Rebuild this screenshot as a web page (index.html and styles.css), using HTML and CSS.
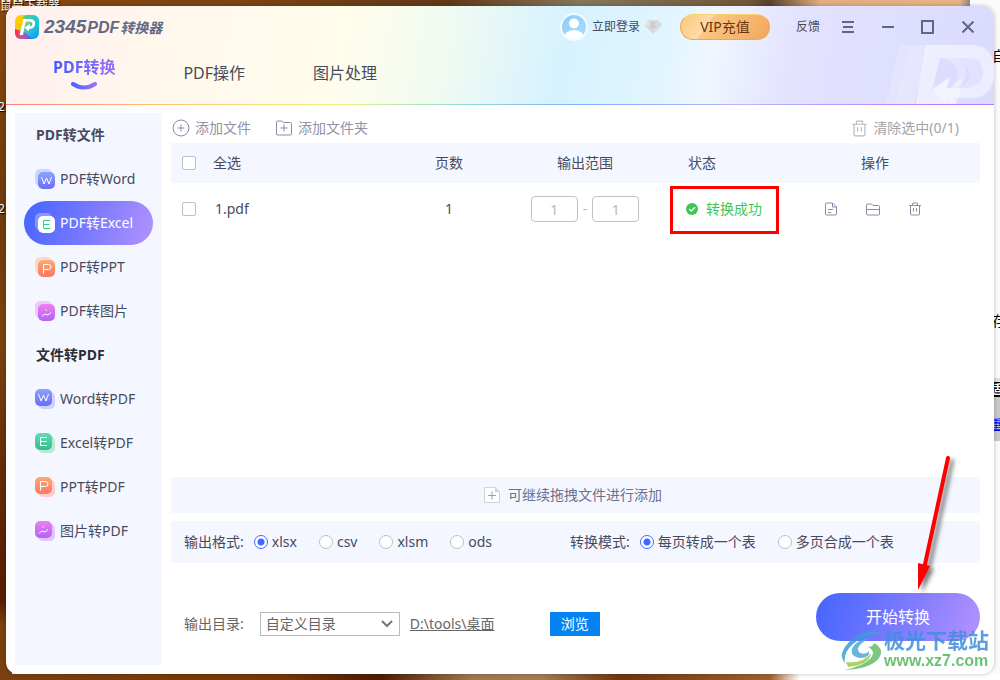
FILE: index.html
```html
<!DOCTYPE html>
<html lang="zh-CN">
<head>
<meta charset="utf-8">
<title>2345 PDF转换器</title>
<link rel="stylesheet" href="styles.css">
</head>
<body>
<svg class="defs" width="0" height="0" aria-hidden="true">
  <defs>
    <linearGradient id="g-blue" x1="0" y1="0" x2="0" y2="1"><stop offset="0" stop-color="#8aa5fb"/><stop offset="1" stop-color="#6a6cf8"/></linearGradient>
    <linearGradient id="g-green" x1="0" y1="0" x2="0" y2="1"><stop offset="0" stop-color="#62dcb8"/><stop offset="1" stop-color="#35bd86"/></linearGradient>
    <linearGradient id="g-orange" x1="0" y1="0" x2="0" y2="1"><stop offset="0" stop-color="#fda870"/><stop offset="1" stop-color="#fd7865"/></linearGradient>
    <linearGradient id="g-pink" x1="0" y1="0" x2="0" y2="1"><stop offset="0" stop-color="#ef7df5"/><stop offset="1" stop-color="#b163f4"/></linearGradient>
    <symbol id="l-w" viewBox="0 0 17 17"><path d="M3.500 5L6 12L8.500 6L11 12L13.500 5"/></symbol>
    <symbol id="l-e" viewBox="0 0 17 17"><path d="M12 4.500H5.500V12.500H12M5.500 8.500H11.500"/></symbol>
    <symbol id="l-p" viewBox="0 0 17 17"><path d="M5.500 13.500V4.500H10.500Q13 4.500 13 7T10.500 9.500H5.500"/></symbol>
    <symbol id="l-i" viewBox="0 0 17 17"><path d="M4 12.500Q6.500 8.500 8 10.500Q9.500 12.500 13 8.500M7.500 6h1.500"/></symbol>
    <symbol id="i-trash" viewBox="0 0 14 14"><path d="M1 3.500H13M4.500 3.500V1.500Q4.500 1 5 1H9Q9.500 1 9.500 1.500V3.500M2.500 3.500V12Q2.500 13 3.500 13H10.500Q11.500 13 11.500 12V3.500M5.500 6V9.500M8.500 6V9.500"/></symbol>
  </defs>
</svg>

<div class="desktop" aria-hidden="true">
  <span class="desk-label desk-a">鼠鼠下载器</span>
  <span class="desk-label desk-b">2</span>
  <span class="desk-label desk-c">2</span>
  <span class="page-text page-a">自</span>
  <span class="page-text page-b">存</span>
  <div class="desk-panel"><b>适</b><u>重</u></div>
</div>

<div class="window">
  <header class="header">
    <svg class="header-art" viewBox="0 0 110 60" aria-hidden="true">
      <g fill="#fff">
        <path opacity=".2" d="M16 1H28L14 60H2Z"/>
        <path opacity=".25" d="M28 1H46L30 60H12Z"/>
        <path opacity=".5" d="M42 1H90Q110 3 110 25V34Q106 54 88 54H70L72 60H32Z M56 14L48 46L66 33L63 44H84Q99 40 99 28Q98 14 84 14Z" fill-rule="evenodd"/>
        <path opacity=".2" d="M62 14H84Q99 14 99 28Q99 40 84 44H76Q90 36 84 24Q78 16 62 14Z"/>
        <path opacity=".25" d="M58 14H68Q84 18 82 32Q79 42 68 44L74 32Q74 20 58 14Z"/>
        <path opacity=".35" d="M48 45L66 33L62 44H66L79 33L73 60L62 54V60Z"/>
      </g>
    </svg>
    <div class="titlebar">
      <div class="brand">
        <svg width="24" height="24" viewBox="0 0 24 24" aria-hidden="true">
          <defs>
            <linearGradient id="lg1" x1="0" y1="0" x2="1" y2="1"><stop offset="0" stop-color="#ffd600"/><stop offset=".36" stop-color="#ffc400"/><stop offset=".5" stop-color="#3ccfc2"/><stop offset="1" stop-color="#009bff"/></linearGradient>
            <linearGradient id="lg2" x1="0" y1="0" x2="1" y2="0"><stop offset="0" stop-color="#ff3030"/><stop offset=".35" stop-color="#d34d9e"/><stop offset="1" stop-color="#2176ff"/></linearGradient>
            <clipPath id="lgc"><rect width="24" height="24" rx="6"/></clipPath>
          </defs>
          <g clip-path="url(#lgc)">
            <rect width="24" height="24" fill="url(#lg1)"/>
            <path d="M0 14L9 17L18 24H0Z" fill="url(#lg2)"/>
            <path d="M11 0H24V13Q18 5 7 3Z" fill="#16cbd3" opacity=".8"/>
          </g>
          <path d="M4.500 20L8.500 4H11L8 20Z" fill="#fff"/>
          <path d="M9 4H15Q21 4.500 20 9.500Q19 14 14 14V16.500L9.500 12.500L15 9V11.500Q17.500 11 17.500 9Q17.500 6.500 14.500 6.500H9Z" fill="#fff"/>
        </svg>
        <h1 class="brand-name"><span class="brand-num">2345</span><span class="brand-pdf">PDF</span><span class="brand-cn">转换器</span></h1>
      </div>
      <div class="account">
        <a class="login" href="#login">
          <svg width="28" height="28" viewBox="0 0 28 28" aria-hidden="true">
            <defs><linearGradient id="av" x1="0" y1="0" x2="1" y2="1"><stop offset="0" stop-color="#8ccdf8"/><stop offset="1" stop-color="#a9ddfc"/></linearGradient><clipPath id="avc"><circle cx="14" cy="14" r="12.500"/></clipPath></defs>
            <circle cx="14" cy="14" r="13" fill="url(#av)" stroke="#f2fbff" stroke-width="2"/>
            <circle cx="14" cy="10.500" r="5" fill="#fff"/>
            <ellipse cx="14" cy="24.500" rx="10" ry="7.500" fill="#fff" clip-path="url(#avc)"/>
          </svg>
          <span>立即登录</span>
          <svg width="18" height="14" viewBox="0 0 18 14" aria-hidden="true"><path d="M4 0H14L18 5L9 14L0 5Z" fill="#d9dadd"/><path d="M0 5L4 0L6 5Z" fill="#e5e5e7"/><path d="M11.500 3Q7 1.500 7 4Q7 5 9 5.300Q11.500 6 10.500 7.300Q9 8.500 6.500 7" fill="none" stroke="#b8bbc0"/></svg>
        </a>
        <button class="vip">VIP充值</button>
        <a class="feedback" href="#feedback">反馈</a>
      </div>
      <div class="controls">
        <button aria-label="菜单"><svg viewBox="0 0 16 16"><path d="M2 3H14M3 8H13M2 13H14"/></svg></button>
        <button aria-label="最小化"><svg viewBox="0 0 16 16"><path d="M2 8H14"/></svg></button>
        <button aria-label="最大化"><svg viewBox="0 0 16 16"><path d="M2 2H13V14H2Z"/></svg></button>
        <button aria-label="关闭"><svg viewBox="0 0 16 16"><path d="M2.500 2.500L13.500 13.500M13.500 2.500L2.500 13.500"/></svg></button>
      </div>
    </div>
    <nav class="tabs">
      <a class="tab tab-active" href="#convert"><span>PDF转换</span>
        <svg width="26" height="8" viewBox="0 0 26 8" aria-hidden="true"><defs><linearGradient id="sm"><stop offset="0" stop-color="#4a63ff"/><stop offset="1" stop-color="#9c71ff"/></linearGradient></defs><path d="M2 2Q13 9 24 2" fill="none" stroke="url(#sm)" stroke-width="4" stroke-linecap="round"/></svg>
      </a>
      <a class="tab" href="#edit">PDF操作</a>
      <a class="tab" href="#image">图片处理</a>
    </nav>
  </header>

  <div class="body">
    <aside class="sidebar">
      <h2 class="side-title">PDF转文件</h2>
      <nav class="side-list">
        <a class="side-item" href="#pdf-word"><svg class="side-icon" viewBox="0 0 20 20"><rect width="17" height="17" rx="5" fill="#c9d9fc"/><rect x="3" y="3" width="17" height="17" rx="5" fill="url(#g-blue)"/><use href="#l-w" x="3" y="3" width="17" height="17"/></svg>PDF转Word</a>
        <a class="side-item side-active" href="#pdf-excel"><svg class="side-icon icon-green" viewBox="0 0 20 20"><rect width="17" height="17" rx="5" fill="#fff" opacity=".3"/><rect x="3" y="3" width="17" height="17" rx="5" fill="#fff"/><use href="#l-e" x="3" y="3" width="17" height="17"/></svg>PDF转Excel</a>
        <a class="side-item" href="#pdf-ppt"><svg class="side-icon" viewBox="0 0 20 20"><rect width="17" height="17" rx="5" fill="#fbd8cc"/><rect x="3" y="3" width="17" height="17" rx="5" fill="url(#g-orange)"/><use href="#l-p" x="3" y="3" width="17" height="17"/></svg>PDF转PPT</a>
        <a class="side-item" href="#pdf-image"><svg class="side-icon" viewBox="0 0 20 20"><rect width="17" height="17" rx="5" fill="#eccafa"/><rect x="3" y="3" width="17" height="17" rx="5" fill="url(#g-pink)"/><use href="#l-i" x="3" y="3" width="17" height="17"/></svg>PDF转图片</a>
      </nav>
      <h2 class="side-title side-title-dark">文件转PDF</h2>
      <nav class="side-list">
        <a class="side-item" href="#word-pdf"><svg class="side-icon" viewBox="0 0 20 20"><rect x="3" y="3" width="17" height="17" rx="5" fill="#cfd3fc"/><rect width="17" height="17" rx="5" fill="url(#g-blue)"/><use href="#l-w" width="17" height="17"/></svg>Word转PDF</a>
        <a class="side-item" href="#excel-pdf"><svg class="side-icon" viewBox="0 0 20 20"><rect x="3" y="3" width="17" height="17" rx="5" fill="#b9e9d9"/><rect width="17" height="17" rx="5" fill="url(#g-green)"/><use href="#l-e" width="17" height="17"/></svg>Excel转PDF</a>
        <a class="side-item" href="#ppt-pdf"><svg class="side-icon" viewBox="0 0 20 20"><rect x="3" y="3" width="17" height="17" rx="5" fill="#fbcfcf"/><rect width="17" height="17" rx="5" fill="url(#g-orange)"/><use href="#l-p" width="17" height="17"/></svg>PPT转PDF</a>
        <a class="side-item" href="#image-pdf"><svg class="side-icon" viewBox="0 0 20 20"><rect x="3" y="3" width="17" height="17" rx="5" fill="#dfc5fb"/><rect width="17" height="17" rx="5" fill="url(#g-pink)"/><use href="#l-i" width="17" height="17"/></svg>图片转PDF</a>
      </nav>
    </aside>

    <main class="main">
      <div class="toolbar">
        <button class="tool"><svg width="18" height="18" viewBox="0 0 18 18"><circle cx="9" cy="9" r="8"/><path d="M5.500 9H12.500M9 5.500V12.500"/></svg>添加文件</button>
        <button class="tool"><svg width="18" height="18" viewBox="0 0 18 18"><path d="M1.500 16V3Q1.500 2 2.500 2H6.500L8.500 3.500H15.500Q16.500 3.500 16.500 4.500V15Q16.500 16 15.500 16H2.500Q1.500 16 1.500 15M5.500 9H12.500M9 5.500V12.500"/></svg>添加文件夹</button>
        <button class="tool tool-clear"><svg width="17" height="17" viewBox="0 0 14 14"><use href="#i-trash"/></svg>清除选中(0/1)</button>
      </div>

      <table class="files">
        <colgroup><col class="c-check"><col><col class="c-pages"><col class="c-range"><col class="c-status"><col class="c-ops"></colgroup>
        <thead>
          <tr>
            <th><input class="check" type="checkbox" id="all"></th>
            <th class="left"><label for="all">全选</label></th>
            <th>页数</th>
            <th>输出范围</th>
            <th class="status-head">状态</th>
            <th class="ops-head">操作</th>
          </tr>
        </thead>
        <tbody>
          <tr>
            <td><input class="check" type="checkbox" id="f1"></td>
            <td class="left"><label for="f1">1.pdf</label></td>
            <td>1</td>
            <td><div class="range"><input type="text" value="1" aria-label="起始页"><span>-</span><input type="text" value="1" aria-label="结束页"></div></td>
            <td class="status-cell">
              <div class="status"><svg width="12" height="12" viewBox="0 0 12 12" aria-hidden="true"><circle cx="6" cy="6" r="6" fill="#3dc653"/><path d="M3.200 6L5.300 8L9 4.200" fill="none" stroke="#fff" stroke-width="1.300"/></svg>转换成功</div>
              <div class="highlight"></div>
            </td>
            <td>
              <div class="ops">
                <button aria-label="打开文件"><svg width="14" height="14" viewBox="0 0 14 14"><path d="M8.500 1H2.500Q1.500 1 1.500 2V12Q1.500 13 2.500 13H11.500Q12.500 13 12.500 12V5L8.500 1V5H12.500M4 7.500H9M4 10.500H7"/></svg></button>
                <button aria-label="打开文件夹"><svg width="14" height="14" viewBox="0 0 14 14"><path d="M.500 12V3Q.500 2 1.500 2H5.500L7 3.500H12.500Q13.500 3.500 13.500 4.500V12Q13.500 13 12.500 13H1.500Q.500 13 .500 12M.500 7.500H13.500"/></svg></button>
                <button aria-label="删除"><svg width="14" height="14" viewBox="0 0 14 14"><use href="#i-trash"/></svg></button>
              </div>
            </td>
          </tr>
        </tbody>
      </table>

      <div class="drop"><svg width="16" height="16" viewBox="0 0 16 16" aria-hidden="true"><path d="M.500 .500H11L15.500 5V15.500H.500Z" fill="#fff" stroke="#d2d3d8"/><path d="M11 0L16 5H11Z" fill="#d2d3d8"/><path d="M4 8.500H12M8 4.500V12.500" stroke="#9c9faa" stroke-width="1"/></svg>可继续拖拽文件进行添加</div>

      <div class="options">
        <div class="group" role="radiogroup" aria-labelledby="fmt">
          <span class="group-name" id="fmt">输出格式:</span>
          <label><input type="radio" name="fmt" checked>xlsx</label>
          <label><input type="radio" name="fmt">csv</label>
          <label><input type="radio" name="fmt">xlsm</label>
          <label><input type="radio" name="fmt">ods</label>
        </div>
        <div class="group" role="radiogroup" aria-labelledby="mode">
          <span class="group-name" id="mode">转换模式:</span>
          <label><input type="radio" name="mode" checked>每页转成一个表</label>
          <label><input type="radio" name="mode">多页合成一个表</label>
        </div>
      </div>

      <div class="footer">
        <div class="output">
          <label for="dir">输出目录:</label>
          <select id="dir"><option>自定义目录</option></select>
          <a href="#folder">D:\tools\桌面</a>
          <button class="browse">浏览</button>
        </div>
        <button class="start">开始转换</button>
      </div>
    </main>
  </div>

  <svg class="arrow" width="60" height="150" viewBox="0 0 60 150" aria-hidden="true">
    <path d="M39 6L15 117" stroke="#f00" stroke-width="4" stroke-linecap="round"/>
    <path d="M9 111L21 114L9 138Z" fill="#f00"/>
  </svg>

  <div class="watermark" aria-hidden="true">
    <svg width="42" height="40" viewBox="0 0 42 40">
      <defs><linearGradient id="wm" x1="0" y1="0" x2="1" y2="1"><stop offset="0" stop-color="#2c8fe0"/><stop offset=".5" stop-color="#3fa8c8"/><stop offset="1" stop-color="#8cc63f"/></linearGradient></defs>
      <path d="M41 1Q20-2 8 11Q-4 24 4 32Q2 22 12 13Q22 4 41 1Z" fill="url(#wm)"/>
      <path d="M33 6Q15 8 11 18Q9 26 20 27Q29 27 28 20Q25 24 19 22Q14 18 21 12Q26 8 33 6Z" fill="#4ba9d9"/>
      <path d="M33 12Q44 18 38 27Q30 38 3 39Q23 35 30 27Q35 20 27 16Q32 16 33 12Z" fill="#67bd6a"/>
      <path d="M5 31Q22 33 30 22Q29 34 7 36Z" fill="#a0c94c"/>
    </svg>
    <div class="watermark-text"><span class="watermark-cn">极光下载站</span><span class="watermark-url">www.xz7.com</span></div>
  </div>
</div>
</body>
</html>
```
FILE: styles.css
```css
* { box-sizing: border-box; }

body {
  margin: 0;
  min-height: 100vh;
  padding: 6px;
  display: flex;
  position: relative;
  overflow: hidden;
  font-family: "Noto Sans", "Noto Sans CJK SC", sans-serif;
  font-size: 14px;
  line-height: 20px;
  color: #484a5c;
  background:
    linear-gradient(90deg, #8a480f 0%, #7c4312 25%, #5f3a18 45%, #85775c 58%, #715739 75%, #59432c 77%, #e0af80 82%, #e6b385 96%, #888 97%, transparent 97%) top / 100% 6px no-repeat,
    linear-gradient(90deg, #7a3f10 0%, #743708 28%, #4c1c04 38%, #9b7851 47%, #a17d55 54%, #6d3510 62%, #a0602e 77%, #fff 80%) bottom / 100% 6px no-repeat,
    linear-gradient(180deg, #8a480f 0%, #6f3b0a 30%, #7c4310 50%, #632b05 70%, #561c03 88%, #7b4208 92%, #7a3f10 100%) left / 12px 100% no-repeat,
    #fbfbfb;
}

a { color: inherit; text-decoration: none; }

button {
  font: inherit;
  color: inherit;
  border: 0;
  padding: 0;
  background: none;
}

.defs { position: absolute; }

/* desktop behind the window */
.desktop { position: absolute; inset: 0; font-size: 12px; overflow: hidden; }
.desk-label { position: absolute; color: #fff; line-height: 16px; text-shadow: 1px 1px 1px #000; }
.desk-a { left: 0; top: -2px; }
.desk-b { left: -2px; top: 99px; }
.desk-c { left: -2px; top: 201px; }
.page-text { position: absolute; left: 992px; color: #000; font-size: 14px; }
.page-a { top: 46px; }
.page-b { top: 311px; }
.desk-panel {
  position: absolute;
  left: 990px;
  top: 378px;
  width: 20px;
  height: 63px;
  border-top: 4px solid #ddd;
  background: #c8c8c8;
}
.desk-panel b { display: block; width: 14px; line-height: 15px; color: #fff; background: #000; }
.desk-panel u { display: block; margin-top: 18px; color: #00f; }

/* window */
.window {
  position: relative;
  flex: 1;
  min-width: 0;
  display: flex;
  flex-direction: column;
  border-radius: 12px;
  background: #fff;
  box-shadow: 0 0 4px rgba(0, 0, 0, .25);
}

.header {
  position: relative;
  border-radius: 12px 12px 0 0;
  background: linear-gradient(100deg, #fff0ef 0%, #fff8ec 18%, #fffdeb 34%, #effaf2 45%, #d6f2ff 56%, #e0f5ff 66%, #f0f6ff 71%, #e3e3ff 79%, #dadafe 100%);
}
.header::after {
  content: "";
  display: block;
  height: 1px;
  background: linear-gradient(90deg, #ff7f77, #ffd17c 20%, #e8f08c 34%, #8de0d0 46%, #82aefc 58%, #b8b4ff 75%, #b27cfb 95%);
}
.header-art { position: absolute; right: 0; bottom: 1px; width: 110px; height: 60px; }

.titlebar {
  position: relative;
  height: 42px;
  padding: 0 18px 0 9px;
  display: flex;
  align-items: center;
}
.brand { display: flex; align-items: center; gap: 5px; margin-right: auto; }
.brand svg, .login svg { display: block; }
.brand-name {
  margin: 0;
  display: flex;
  align-items: baseline;
  gap: 1px;
  color: #626987;
  font-weight: 700;
  font-style: italic;
}
.brand-num { font-size: 19px; font-family: "Liberation Sans", sans-serif; }
.brand-pdf { font-size: 16px; font-family: "Liberation Sans", sans-serif; }
.brand-cn { font-size: 14px; }
.account { display: flex; align-items: center; font-size: 12px; }
.login { display: flex; align-items: center; gap: 4px; }
.vip {
  width: 90px;
  height: 26px;
  margin: 0 26px 0 18px;
  border: 1px solid #efa650;
  border-top-color: #f9d16c;
  border-radius: 13px;
  background: linear-gradient(125deg, #fcc67e 0%, #ffdca9 31%, #fcc682 32%, #f2a75e 100%);
  color: #6a3618;
  font-size: 14px;
}
.controls { display: flex; gap: 24px; margin-left: 20px; }
.controls button { width: 16px; height: 16px; display: flex; }
.controls svg { width: 16px; height: 16px; fill: none; stroke: #606783; stroke-width: 2; }

.tabs {
  position: relative;
  height: 56px;
  padding: 7px 47px;
  display: flex;
  align-items: flex-start;
  gap: 68px;
  font-size: 16px;
}
.tab { padding-top: 6px; line-height: 24px; }
.tab-active {
  padding: 0;
  display: flex;
  flex-direction: column;
  align-items: center;
  gap: 3px;
  font-weight: 700;
}
.tab-active span {
  color: transparent;
  background: linear-gradient(90deg, #3e5bff, #9a6fff);
  background-clip: text;
  -webkit-background-clip: text;
}

.body { flex: 1; display: flex; gap: 9px; padding: 8px 14px 9px 9px; }

/* sidebar */
.sidebar { width: 147px; flex: none; padding: 0 9px; background: #f4f7ff; }
.side-title { margin: 0; padding-left: 12px; font-size: 14px; line-height: 44px; }
.side-title-dark { color: #2c2d35; }
.side-item {
  height: 44px;
  padding-left: 11px;
  display: flex;
  align-items: center;
  gap: 5px;
  white-space: nowrap;
}
.side-active {
  border-radius: 22px;
  color: #fff;
  background: linear-gradient(110deg, #4867ff 5%, #7f7bff 55%, #ae90fd 95%);
}
.side-icon { width: 20px; height: 20px; flex: none; fill: none; stroke: #fff; stroke-width: 1; }
.side-icon rect { stroke: none; }
.icon-green { stroke: #2fcd91; }

/* main column */
.main { flex: 1; min-width: 0; display: flex; flex-direction: column; }
.toolbar { height: 30px; padding: 0 21px 0 1px; display: flex; align-items: center; gap: 24px; color: #8f93a3; }
.tool { display: flex; align-items: center; gap: 5px; }
.tool svg, .ops svg { display: block; fill: none; stroke: #888da5; stroke-width: 1; }
.tool-clear { margin-left: auto; color: #a3a3a8; }
.tool-clear svg { stroke: #b9bac4; }

.files { width: 100%; table-layout: fixed; border-collapse: collapse; text-align: center; }
.c-check { width: 42px; }
.c-pages { width: 120px; }
.c-range { width: 152px; }
.c-status { width: 128px; }
.c-ops { width: 191px; }
.files th, .files td { padding: 0; font-weight: 400; }
.files thead { background: #f4f7ff; }
.files th { height: 40px; }
.files td { height: 52px; }
.files .left { text-align: left; }
.files td.left { padding-left: 2px; }
.files .status-head { padding-left: 27px; text-align: left; }
.files .ops-head { padding-left: 72px; text-align: left; }
.check {
  appearance: none;
  display: block;
  width: 14px;
  height: 14px;
  margin: 0 0 0 11px;
  border: 1px solid #bfc0c6;
  border-radius: 2px;
  background: #fff;
}
.range { display: flex; justify-content: center; align-items: center; gap: 5px; color: #b8b9be; }
.range input {
  width: 47px;
  height: 26px;
  padding: 0;
  border: 1px solid #c1c2c6;
  border-radius: 4px;
  background: #fff;
  color: #b8b9be;
  font: inherit;
  text-align: center;
}
.status-cell { position: relative; }
.status { padding-left: 25px; display: flex; align-items: center; gap: 8px; color: #3dc653; }
.highlight { position: absolute; left: 9px; top: 3px; width: 109px; height: 48px; border: 3px solid #f00; }
.ops { padding-left: 35px; display: flex; gap: 28px; }

.drop {
  height: 36px;
  margin-top: auto;
  display: flex;
  align-items: center;
  justify-content: center;
  gap: 8px;
  padding-right: 5px;
  background: #f4f7ff;
  color: #6b7090;
}
.options {
  height: 42px;
  margin-top: 8px;
  padding: 0 13px;
  display: flex;
  align-items: center;
  gap: 78px;
  background: #f4f7ff;
  white-space: nowrap;
}
.group { display: flex; gap: 22px; }
.group-name { margin-right: -12px; }
.group label { display: flex; align-items: center; gap: 4px; }
.group input {
  appearance: none;
  width: 14px;
  height: 14px;
  margin: 0;
  border: 1px solid #bfc0c6;
  border-radius: 50%;
  background: #fff;
}
.group input:checked { border-color: #4169ff; background: radial-gradient(circle, #4169ff 3px, #fff 4px); }

.footer { height: 102px; padding-top: 30px; display: flex; align-items: flex-start; justify-content: space-between; }
.output { margin-top: 19px; padding-left: 13px; display: flex; align-items: center; color: #666; white-space: nowrap; }
.output select {
  appearance: none;
  width: 140px;
  height: 24px;
  margin: 0 10px 0 16px;
  padding: 0 5px;
  border: 1px solid #bbb;
  border-radius: 0;
  color: #666;
  font: inherit;
  line-height: 20px;
  background: #fff url("data:image/svg+xml,%3Csvg xmlns='http://www.w3.org/2000/svg' width='12' height='8'%3E%3Cpath d='M1 1L6 6L11 1' fill='none' stroke='%23777' stroke-width='2'/%3E%3C/svg%3E") right 6px center no-repeat;
}
.output a { width: 140px; text-decoration: underline; }
.browse { width: 50px; height: 24px; color: #fff; background: #0583f2; }
.start {
  width: 164px;
  height: 48px;
  border-radius: 24px;
  color: #fff;
  font-size: 16px;
  background: linear-gradient(110deg, #4867ff 5%, #7f7bff 55%, #ae90fd 95%);
}

/* overlays */
.arrow { position: absolute; right: 25px; bottom: 72px; filter: drop-shadow(4px 3px 2px rgba(0, 0, 0, .5)); }
.watermark { position: absolute; right: 5px; bottom: 2px; display: flex; align-items: center; gap: 1px; opacity: .85; }
.watermark-text { display: flex; flex-direction: column; font-weight: 700; }
.watermark-cn { font-size: 21px; line-height: 20px; color: #3f8fdd; }
.watermark-url { font: 700 16px/22px "Liberation Sans", sans-serif; color: #52b85c; }
```
